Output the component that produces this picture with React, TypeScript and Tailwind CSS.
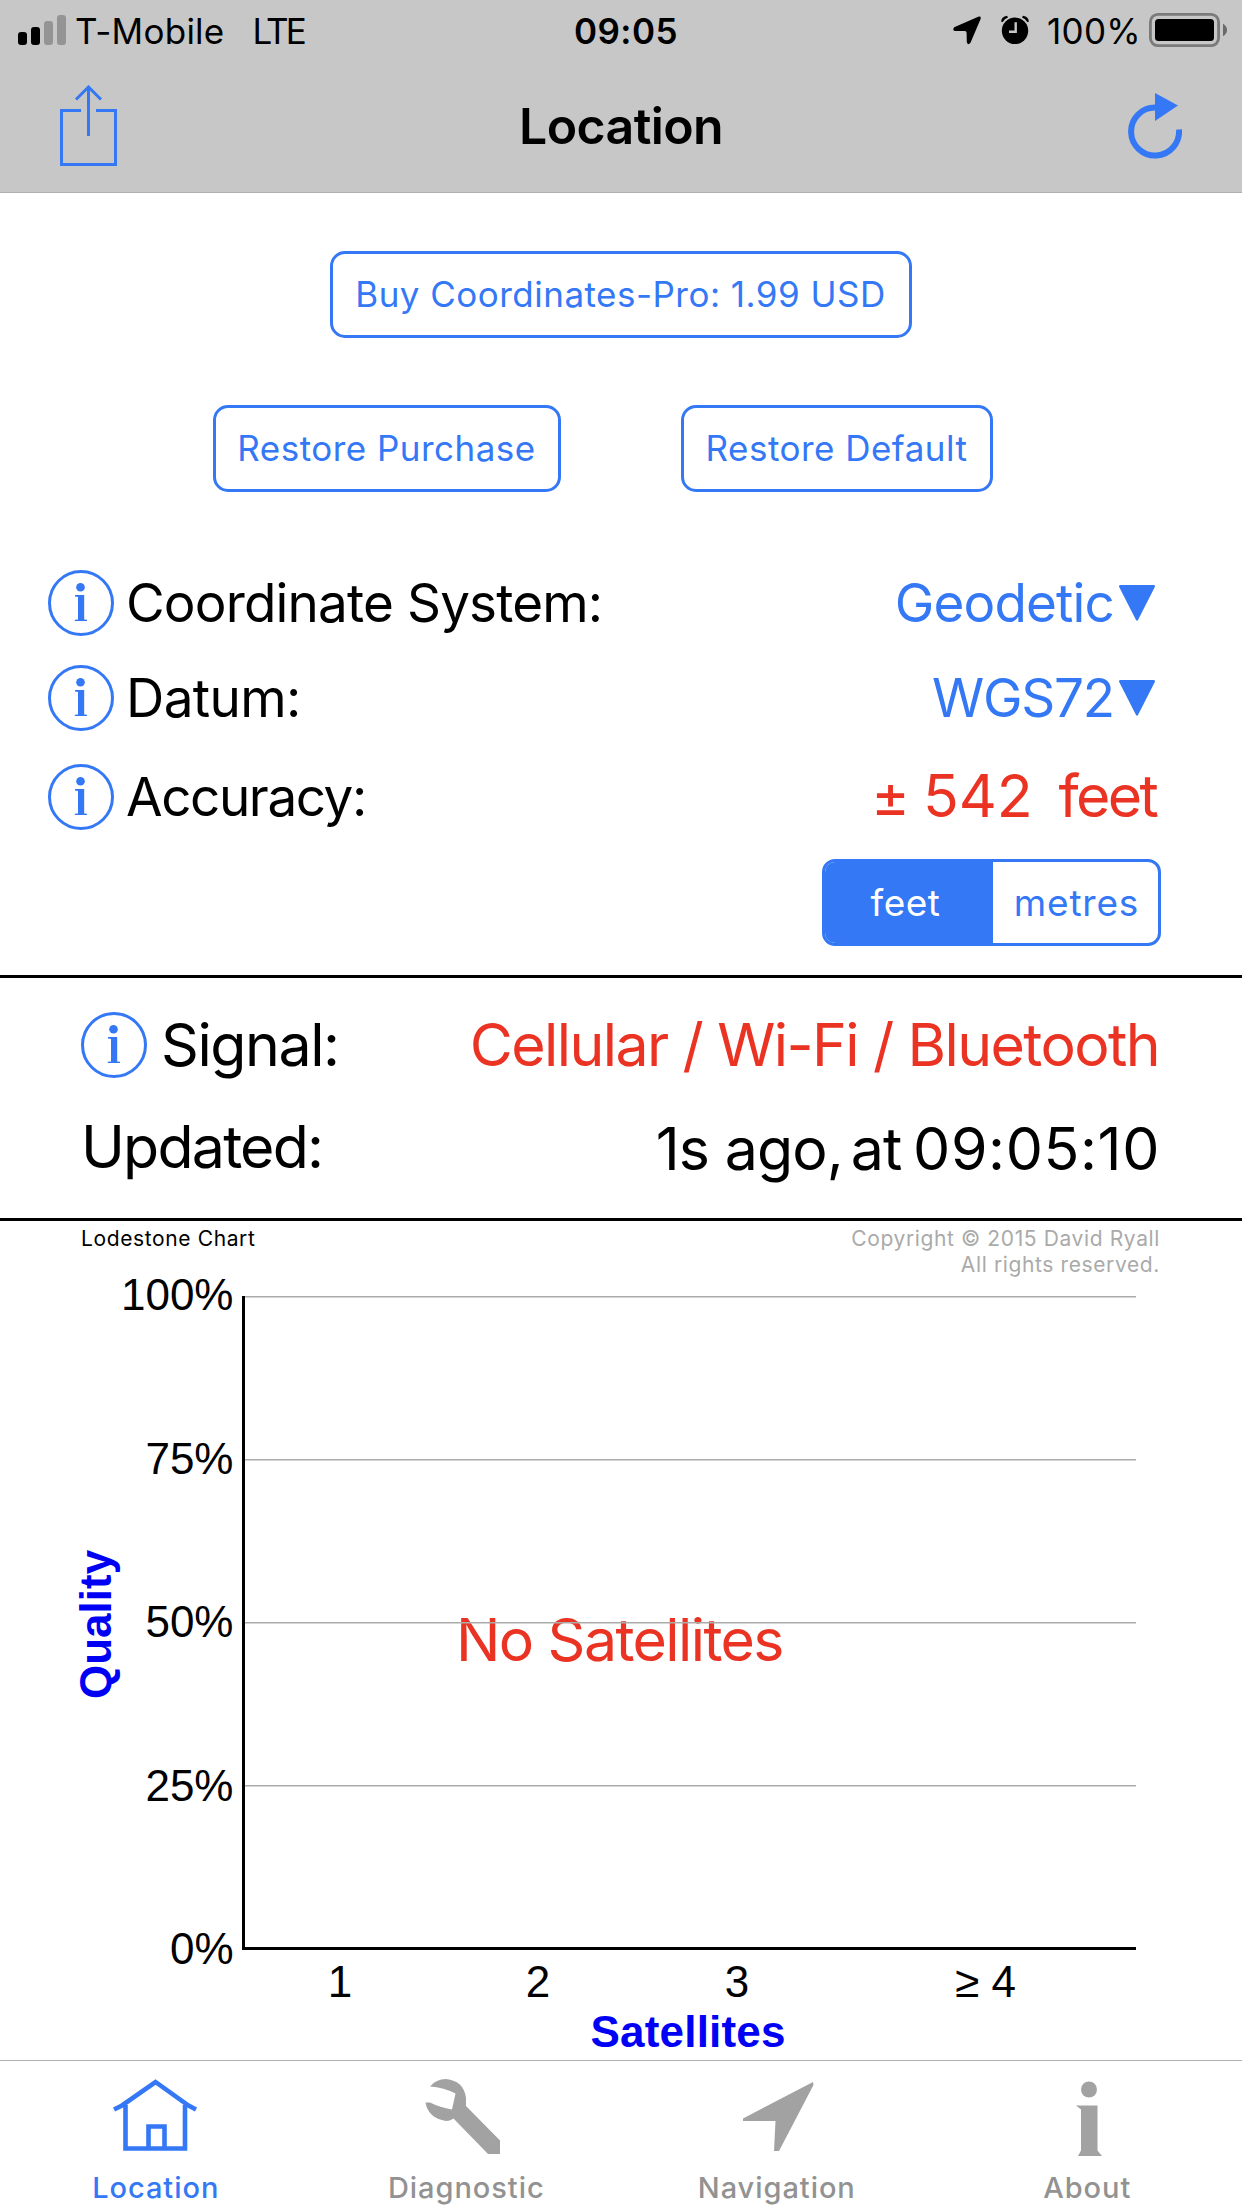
import { useState } from 'react'
import type { ReactNode } from 'react'
import { clsx } from 'clsx'

const yLabels = ['100%', '75%', '50%', '25%', '0%']

const xLabels = [
    { text: '1', x: 340 },
    { text: '2', x: 538 },
    { text: '3', x: 737 },
    { text: '≥ 4', x: 985.5 },
]

function StatusBar() {
    return (
        <div className="grid h-[60px] grid-cols-[1fr_auto_1fr] items-center pl-[18px] pr-[15px] text-[35px] leading-none">
            <div className="flex items-center">
                <svg width="48" height="30" viewBox="0 0 48 30">
                    <rect x="0" y="17" width="9" height="13" rx="3" />
                    <rect x="13" y="12" width="9" height="18" rx="3" />
                    <rect x="26" y="6" width="9" height="24" rx="3" fill="#949494" />
                    <rect x="39" y="0" width="9" height="30" rx="3" fill="#949494" />
                </svg>
                <span className="ml-[9px] pt-[3px] tracking-[0.25px]">T-Mobile</span>
                <span className="ml-[28px] pt-[3px] tracking-[-2.9px]">LTE</span>
            </div>
            <span className="pl-[7px] pt-[3px] font-semibold tracking-[0.5px]">09:05</span>
            <div className="flex items-center justify-end">
                <svg width="28" height="30" viewBox="0 0 28 30">
                    <path d="M25.8 1.6 1.2 12.2Q-1 15.4 2 15.9H12Q13.5 16 13.6 17.8L13.8 27Q15 31.2 17.6 27.6L27.6 4Q28.3.9 25.8 1.6Z" />
                </svg>
                <svg className="ml-[20px]" width="28" height="30" viewBox="0 0 28 30">
                    <circle cx="14" cy="15.8" r="13.2" />
                    <path d="M.2 6.8Q0 2 6 .8L7 2.6Q3.4 4 1.8 7ZM27.8 6.8Q28 2 22 .8L21 2.6Q24.6 4 26.2 7Z" />
                    <path d="M14.7 7.3V16.8H8" fill="none" stroke="#c7c7c7" strokeWidth="2.4" />
                </svg>
                <span className="ml-[18px] pt-[3px] tracking-[0.3px]">100%</span>
                <svg className="ml-[8px]" width="78" height="34" viewBox="0 0 78 34">
                    <rect x="1.4" y="1.4" width="68.2" height="31.2" rx="7.5" fill="none" stroke="#7a7a7a" strokeWidth="2.8" />
                    <rect x="6" y="6" width="59" height="22" rx="3.5" />
                    <path d="M74 10.8Q78 13 78 17T74 23.2Z" fill="#6a6a6a" />
                </svg>
            </div>
        </div>
    )
}

function TitleBar() {
    return (
        <div className="grid h-[132px] grid-cols-[1fr_auto_1fr] items-center pl-[60px] pr-[60px]">
            <button aria-label="Share" className="justify-self-start">
                <svg width="57" height="82" viewBox="0 0 57 82" fill="none" stroke="#3478f6" strokeWidth="3">
                    <path d="M21 25.5H1.5V79.5H55.5V25.5H36" />
                    <path d="M28.5 51V2M16 14.5 28.5 2 41 14.5" />
                </svg>
            </button>
            <h1 className="text-[50px] font-semibold leading-none tracking-[-0.6px]">Location</h1>
            <button aria-label="Refresh" className="justify-self-end">
                <svg width="54" height="66" viewBox="0 0 54 66">
                    <path d="M27 14.5A24 24 0 1 0 51 36.5" fill="none" stroke="#3478f6" strokeWidth="6" />
                    <path d="M27 0 50 12.5 27 28Z" fill="#3478f6" />
                </svg>
            </button>
        </div>
    )
}

function OutlineButton({ className, children }: { className: string; children: ReactNode }) {
    return (
        <button className={clsx('h-[87px] rounded-[15px] border-[3px] border-[#3478f6] pr-[1px] text-[35px] leading-none tracking-[0.48px] text-[#3478f6]', className)}>
            {children}
        </button>
    )
}

function InfoIcon() {
    return (
        <svg className="shrink-0" width="66" height="66" viewBox="0 0 66 66" fill="#3478f6">
            <circle cx="33" cy="33" r="31.5" fill="none" stroke="#3478f6" strokeWidth="3" />
            <circle cx="32.5" cy="17.3" r="4.3" />
            <path d="M27 25H36.2V49.4L39 49.8V51H26.8V49.8L30 49.4V27L27 26.5Z" />
        </svg>
    )
}

function SettingRow({ label, className, children }: { label: string; className: string; children: ReactNode }) {
    return (
        <div className={clsx('flex h-[66px] items-center pl-[48px] pr-[87px] text-[53px] leading-none', className)}>
            <InfoIcon />
            <span className="ml-[12px]">{label}</span>
            <div className="ml-auto flex items-center">{children}</div>
        </div>
    )
}

function Triangle() {
    return (
        <svg className="ml-[5px]" width="36" height="36" viewBox="0 0 36 36" fill="#3478f6">
            <path d="M1 0H35Q36.4.4 35.8 2L19 35Q18 36.6 17 35L.2 2Q-.4.4 1 0Z" />
        </svg>
    )
}

function UnitToggle() {
    const [unit, setUnit] = useState('feet')

    return (
        <div className="ml-auto mr-[81px] mt-[29px] flex h-[87px] w-[339px] overflow-hidden rounded-[13px] border-[3px] border-[#3478f6] text-[37px] leading-none">
            {['feet', 'metres'].map((name) => (
                <button
                    key={name}
                    onClick={() => setUnit(name)}
                    className={clsx(
                        'pb-[1px]',
                        name === 'feet' ? 'w-[168px] pr-[7px] tracking-[0.5px]' : 'flex-1 pl-[2px] tracking-[0.8px]',
                        unit === name ? 'bg-[#3478f6] text-white' : 'text-[#3478f6]'
                    )}
                >
                    {name}
                </button>
            ))}
        </div>
    )
}

function LodestoneChart() {
    return (
        <svg className="-mt-[20px] block" width="1242" height="803" viewBox="0 -20 1242 803">
            <text x="456" y="384" fontSize="59" letterSpacing="-1.6" fill="#ea3323">No Satellites</text>
            {/* grid runs over the message */}
            {[0, 1, 2, 3].map((i) => (
                <rect key={i} x="245" y={19 + i * 163} width="891" height="1.5" fill="#ababab" />
            ))}
            <path d="M243.5 19V671.5H1136" fill="none" stroke="#000" strokeWidth="3" />
            <g fontFamily='"Liberation Sans", Arial, sans-serif' fontSize="44">
                {yLabels.map((label, i) => (
                    <text key={label} x="233.5" y={33 + i * 163.5} textAnchor="end">{label}</text>
                ))}
                {xLabels.map((label) => (
                    <text key={label.text} x={label.x} y="720" textAnchor="middle">{label.text}</text>
                ))}
                <g fontWeight="700" fill="#0000f5">
                    <text x="590.5" y="769.5" letterSpacing="0.2">Satellites</text>
                    <text transform="translate(110.5 422) rotate(-90)">Quality</text>
                </g>
            </g>
        </svg>
    )
}

const tabs = [
    {
        name: 'Location',
        icon: (
            <g fill="none" stroke="#3478f6" strokeWidth="4.6">
                <path d="M4 38.5 12 34.5 45.5 11 78.5 34.5 86 38.5" />
                <path d="M15.5 34V77.5H75V34M38.5 77V55.5H54.5V77" />
            </g>
        ),
    },
    {
        name: 'Diagnostic',
        icon: <path d="M9 15.5Q15 8 25 8 43 10 45 27V35L79 69.5V83H67L32.5 47.5Q29 50 25 50 7 47 4.5 31.5H9Q19 36.5 31 38.5L34.5 22.5Q23 16.5 9 15.5Z" />,
    },
    {
        name: 'Navigation',
        icon: <path d="M82 11 12 47.5V50H44.5L43 80H48L82.5 14Z" />,
    },
    {
        name: 'About',
        icon: (
            <>
                <circle cx="47" cy="18.5" r="8" />
                <path d="M34 34.5H55.5V79.5L60 85H36L39 79.5V38.5Z" />
            </>
        ),
    },
]

function TabBar() {
    const [active, setActive] = useState('Location')

    return (
        <nav className="grid h-[148px] grid-cols-4 border-t border-[#b0b0b0]">
            {tabs.map((tab) => (
                <button
                    key={tab.name}
                    onClick={() => setActive(tab.name)}
                    className={clsx('flex flex-col items-center pt-[10px]', active === tab.name ? 'text-[#3478f6]' : 'text-[#929292]')}
                >
                    <svg width="90" height="90" viewBox="0 0 90 90" fill="#a2a2a2">{tab.icon}</svg>
                    <span className="mt-[9px] pl-[1px] text-[29px] font-medium leading-[36px] tracking-[0.95px]">{tab.name}</span>
                </button>
            ))}
        </nav>
    )
}

export default function App() {
    return (
        <div className="h-[2208px] w-[1242px] overflow-hidden bg-white font-['Inter',sans-serif] text-black">
            <header className="h-[193px] border-b border-[#b0b0b0] bg-[#c7c7c7]">
                <StatusBar />
                <TitleBar />
            </header>

            <main className="h-[1867px] pt-[58px]">
                <OutlineButton className="mx-auto block w-[582px]">Buy Coordinates-Pro: 1.99 USD</OutlineButton>
                <div className="mt-[67px] flex gap-[120px] pl-[213px]">
                    <OutlineButton className="w-[348px]">Restore Purchase</OutlineButton>
                    <OutlineButton className="w-[312px]">Restore Default</OutlineButton>
                </div>

                <SettingRow label="Coordinate System:" className="mt-[78px] tracking-[-0.85px]">
                    <span className="text-[#3478f6]">Geodetic</span>
                    <Triangle />
                </SettingRow>
                <SettingRow label="Datum:" className="mt-[29px] tracking-[-0.6px]">
                    <span className="tracking-[-1.2px] text-[#3478f6]">WGS72</span>
                    <Triangle />
                </SettingRow>
                <SettingRow label="Accuracy:" className="mt-[33px] tracking-[-1.4px]">
                    <div className="flex pb-[3px] text-[59px] text-[#ea3323]">
                        <span className="tracking-normal">±</span>
                        <span className="ml-[13px] tracking-[-0.1px]">542</span>
                        <span className="-mr-[1px] ml-[26px] tracking-[-2.7px]">feet</span>
                    </div>
                </SettingRow>
                <UnitToggle />

                <section className="mt-[29px] h-[246px] border-y-[3px] border-black pl-[81px] pr-[83px] pt-[34px] text-[59px] leading-none">
                    <div className="flex h-[66px] items-center">
                        <InfoIcon />
                        <span className="ml-[14px] pb-[1px] tracking-[-1.43px]">Signal:</span>
                        <span className="ml-auto pb-[1px] tracking-[-1.6px] text-[#ea3323]">Cellular / Wi-Fi / Bluetooth</span>
                    </div>
                    <div className="mt-[37px] flex h-[66px] items-center justify-between">
                        <span className="pb-[3px] tracking-[-1.79px]">Updated:</span>
                        <span className="-mr-[1px] whitespace-pre tracking-[-0.88px]">
                            1s ago,
                            <span className="-ml-[8px]"> at </span>
                            <span className="-ml-[4px] tracking-[0.6px]">09:05:10</span>
                        </span>
                    </div>
                </section>

                <div className="flex h-[56px] justify-between pl-[81px] pr-[82px] pt-[5px] text-[21px] leading-[26px] tracking-[0.62px]">
                    <span>Lodestone Chart</span>
                    <span className="text-right text-[#aaaaaa]">
                        Copyright © 2015 David Ryall
                        <br />
                        All rights reserved.
                    </span>
                </div>
                <LodestoneChart />
            </main>

            <TabBar />
        </div>
    )
}
